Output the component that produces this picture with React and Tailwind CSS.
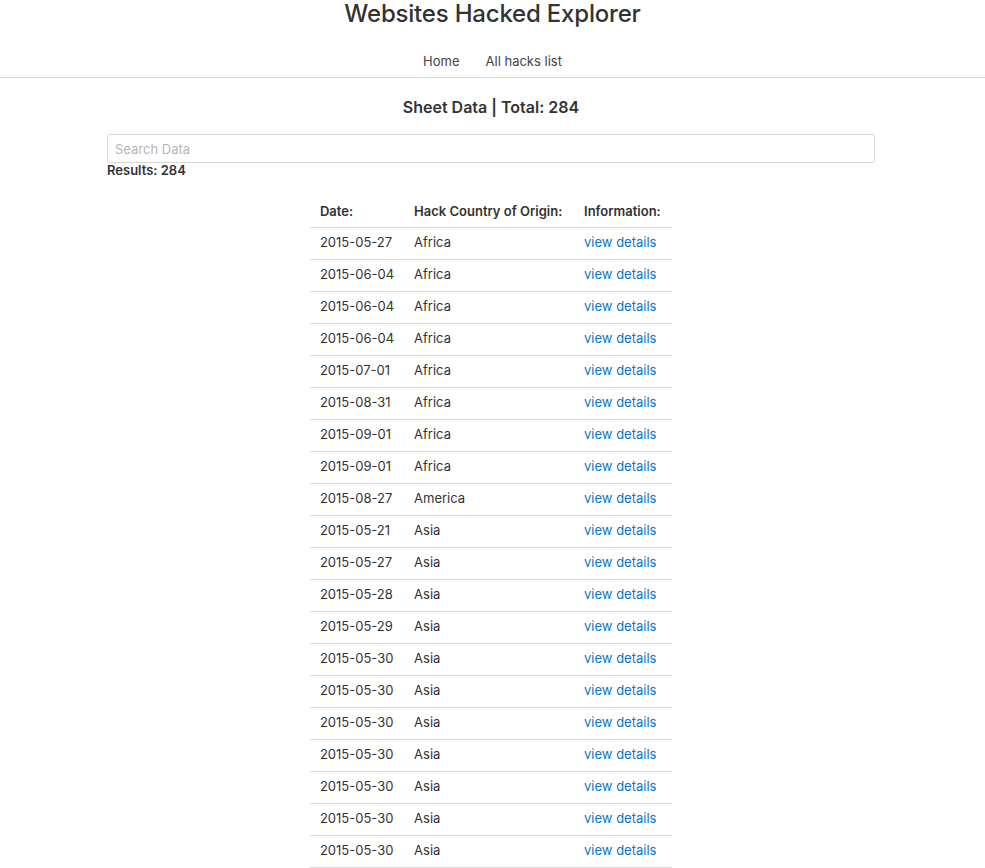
import React from 'react';

const rows = [
  ['2015-05-27', 'Africa'],
  ['2015-06-04', 'Africa'],
  ['2015-06-04', 'Africa'],
  ['2015-06-04', 'Africa'],
  ['2015-07-01', 'Africa'],
  ['2015-08-31', 'Africa'],
  ['2015-09-01', 'Africa'],
  ['2015-09-01', 'Africa'],
  ['2015-08-27', 'America'],
  ['2015-05-21', 'Asia'],
  ['2015-05-27', 'Asia'],
  ['2015-05-28', 'Asia'],
  ['2015-05-29', 'Asia'],
  ['2015-05-30', 'Asia'],
  ['2015-05-30', 'Asia'],
  ['2015-05-30', 'Asia'],
  ['2015-05-30', 'Asia'],
  ['2015-05-30', 'Asia'],
  ['2015-05-30', 'Asia'],
  ['2015-05-30', 'Asia'],
];

const App = () => {
  return (
    <div className="min-h-screen bg-white text-[#333] font-['Inter','Liberation_Sans',sans-serif]">
      {/* Header */}
      <header className="border-b border-[#d9d9d9]">
        <h1 className="text-center text-[24px] leading-[28px] font-medium tracking-[-0.2px]">
          Websites Hacked Explorer
        </h1>
        <nav className="flex justify-center gap-[26px] pt-[25px] pb-[8px] text-[13px] leading-[16px] text-[#444]">
          <a href="#">Home</a>
          <a href="#">All hacks list</a>
        </nav>
      </header>

      {/* Sheet */}
      <main className="pl-[107px] pr-[110px]">
        <h2 className="text-center text-[16px] leading-[20px] font-semibold pt-[19px]">
          Sheet Data | Total: 284
        </h2>
        <input
          type="text"
          placeholder="Search Data"
          className="mt-[17px] block w-full h-[29px] border border-[#d6d6d6] rounded-[3px] px-[7px] text-[13px] placeholder:text-[#b5b5b5] outline-none"
        />
        <p className="text-[13px] leading-[14px] font-semibold">Results: 284</p>

        <div className="flex justify-center pt-[20px]">
          <table className="text-[13px] text-left border-collapse whitespace-nowrap">
            <thead>
              <tr className="border-b border-[#dcdcdc]">
                <th className="font-semibold px-[10px] h-[30px] w-[93px]">Date:</th>
                <th className="font-semibold px-[10px] h-[30px] w-[170px]">Hack Country of Origin:</th>
                <th className="font-semibold px-[10px] h-[30px] w-[98px]">Information:</th>
              </tr>
            </thead>
            <tbody>
              {rows.map(([date, country], i) => (
                <tr key={i} className="border-b border-[#dcdcdc]">
                  <td className="px-[10px] h-[32px]">{date}</td>
                  <td className="px-[10px] h-[32px]">{country}</td>
                  <td className="px-[10px] h-[32px]">
                    <a href="#" className="text-[#0a74cc]">view details</a>
                  </td>
                </tr>
              ))}
            </tbody>
          </table>
        </div>
      </main>
    </div>
  );
};

export default App;
